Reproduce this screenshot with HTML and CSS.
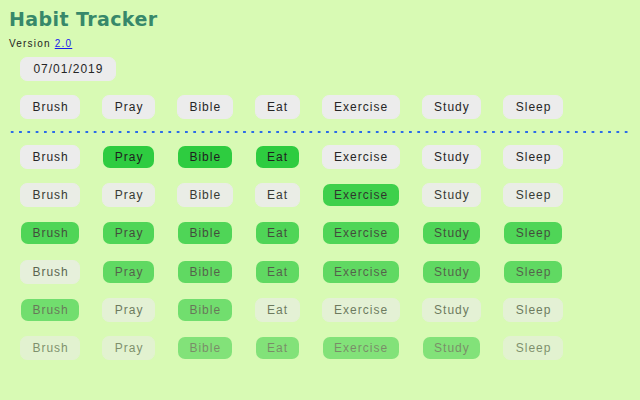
FILE: index.html
```html
<!DOCTYPE html>
<html>
<head>
<meta charset="utf-8">
<title>Habit Tracker</title>
<link rel="stylesheet" href="styles.css">
</head>
<body>
<h1 class="title">Habit Tracker</h1>
<div class="version">Version <a href="#">2.0</a></div>
<div class="date-row"><button class="btn date">07/01/2019</button></div>
<div class="row header">
  <button class="btn">Brush</button><button class="btn">Pray</button><button class="btn">Bible</button><button class="btn">Eat</button><button class="btn">Exercise</button><button class="btn">Study</button><button class="btn">Sleep</button>
</div>
<div class="divider"></div>
<div class="days">
  <div class="row day">
    <button class="btn">Brush</button><button class="btn on">Pray</button><button class="btn on">Bible</button><button class="btn on">Eat</button><button class="btn">Exercise</button><button class="btn">Study</button><button class="btn">Sleep</button>
  </div>
  <div class="row day">
    <button class="btn">Brush</button><button class="btn">Pray</button><button class="btn">Bible</button><button class="btn">Eat</button><button class="btn on">Exercise</button><button class="btn">Study</button><button class="btn">Sleep</button>
  </div>
  <div class="row day">
    <button class="btn on">Brush</button><button class="btn on">Pray</button><button class="btn on">Bible</button><button class="btn on">Eat</button><button class="btn on">Exercise</button><button class="btn on">Study</button><button class="btn on">Sleep</button>
  </div>
  <div class="row day">
    <button class="btn">Brush</button><button class="btn on">Pray</button><button class="btn on">Bible</button><button class="btn on">Eat</button><button class="btn on">Exercise</button><button class="btn on">Study</button><button class="btn on">Sleep</button>
  </div>
  <div class="row day">
    <button class="btn on">Brush</button><button class="btn">Pray</button><button class="btn on">Bible</button><button class="btn">Eat</button><button class="btn">Exercise</button><button class="btn">Study</button><button class="btn">Sleep</button>
  </div>
  <div class="row day">
    <button class="btn">Brush</button><button class="btn">Pray</button><button class="btn on">Bible</button><button class="btn on">Eat</button><button class="btn on">Exercise</button><button class="btn on">Study</button><button class="btn">Sleep</button>
  </div>
</div>
</body>
</html>
```
FILE: styles.css
```css
html, body {
  background: #d8fab4;
}
body {
  margin: 8px;
  font-family: "Liberation Sans", Arial, sans-serif;
  color: #222;
  overflow: hidden;
}
.title {
  margin: 0 0 0 1px;
  font-family: "DejaVu Sans", Verdana, sans-serif;
  font-weight: bold;
  font-size: 19px;
  line-height: 22px;
  letter-spacing: 0.4px;
  color: #37886a;
}
.version {
  margin-top: 8px;
  margin-left: 1px;
  font-size: 10px;
  line-height: 12px;
  letter-spacing: 1.2px;
  color: #222;
}
.version a {
  color: #1a1aee;
  text-decoration: underline;
}
.date-row {
  margin-top: 7px;
  padding-left: 12px;
  display: flex;
}
.row {
  display: flex;
  gap: 22px;
  padding-left: 12px;
}
.header {
  margin-top: 13.5px;
}
.btn {
  font-family: "Liberation Sans", Arial, sans-serif;
  font-size: 12px;
  line-height: 14px;
  letter-spacing: 1px;
  padding: 4px 10.6px 4px 11.4px;
  border: 1px solid #ececec;
  border-radius: 7px;
  background: #ececec;
  color: #262626;
  margin: 0;
  cursor: pointer;
}
.btn.date {
  padding-left: 12.4px;
  padding-right: 11.6px;
}
.btn.on {
  background: #2ecc40;
  border: none;
  margin: 1px;
  color: #1f1f1f;
}
.divider {
  margin-top: 11px;
  margin-right: -8px;
  height: 4px;
  background-image: radial-gradient(ellipse 1.9px 1.5px at center, #2c6ce8 80%, rgba(44,108,232,0) 100%);
  background-size: 8.3px 4px;
  background-repeat: repeat-x;
  background-position: 0 0;
}
.days {
  margin-top: 11px;
  display: flex;
  flex-direction: column;
  gap: 14.4px;
}
.day:nth-child(1) { opacity: 1; }
.day:nth-child(2) { opacity: 0.9; }
.day:nth-child(3) { opacity: 0.8; }
.day:nth-child(4) { opacity: 0.7; }
.day:nth-child(5) { opacity: 0.6; }
.day:nth-child(6) { opacity: 0.5; }
```
